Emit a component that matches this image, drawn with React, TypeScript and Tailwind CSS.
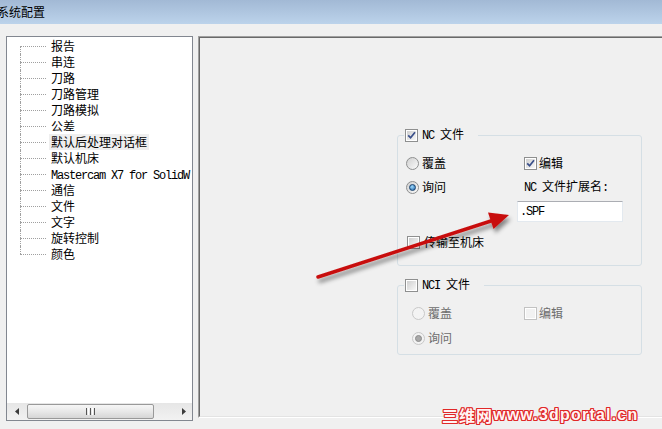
import React from "react";

const items = [
  "报告",
  "串连",
  "刀路",
  "刀路管理",
  "刀路模拟",
  "公差",
  "默认后处理对话框",
  "默认机床",
  "Mastercam X7 for SolidW",
  "通信",
  "文件",
  "文字",
  "旋转控制",
  "颜色",
];

function Mono({ children }: { children: React.ReactNode }) {
  return (
    <span className="font-['Liberation_Mono',monospace] text-[12px] tracking-[-1.2px]">
      {children}
    </span>
  );
}

function Check({ checked, disabled }: { checked?: boolean; disabled?: boolean }) {
  return (
    <span
      className={
        disabled
          ? "w-[13px] h-[13px] border border-[#c2c2c2] bg-white p-[1px] flex shrink-0"
          : "w-[13px] h-[13px] border border-[#8e8f8f] bg-white p-[1px] flex shrink-0"
      }
    >
      <span
        className={
          disabled
            ? "flex-1 flex items-center justify-center bg-[#f2f2f2]"
            : "flex-1 flex items-center justify-center bg-linear-to-br from-[#cfcfcf] to-[#f8f8f8]"
        }
      >
        {checked && (
          <svg width="9" height="9" viewBox="0 0 9 9">
            <path d="M1.2 4.3 L3.6 6.8 L8 1.2" stroke="#3a4f8a" strokeWidth="1.7" fill="none" />
          </svg>
        )}
      </span>
    </span>
  );
}

function Radio({ checked, disabled }: { checked?: boolean; disabled?: boolean }) {
  return (
    <span
      className={
        disabled
          ? "w-[13px] h-[13px] rounded-full border border-[#c8c8c8] bg-[#f3f3f3] flex items-center justify-center shrink-0"
          : "w-[13px] h-[13px] rounded-full border border-[#8e8f8f] bg-linear-to-br from-[#d0d0d0] to-[#fbfbfb] flex items-center justify-center shrink-0"
      }
    >
      {checked &&
        (disabled ? (
          <span className="w-[7px] h-[7px] rounded-full bg-[#a8a8a8] border border-[#8c8c8c]" />
        ) : (
          <span className="w-[7px] h-[7px] rounded-full bg-[radial-gradient(circle_at_40%_35%,#9fdcff,#1b5fa3)] border border-[#17416e]" />
        ))}
    </span>
  );
}

function TreeRow({ label, first, last, sel }: { label: string; first: boolean; last: boolean; sel: boolean }) {
  const ascii = /^[\x00-\x7f]+$/.test(label);
  return (
    <div className="flex h-[16px] pl-[13px]">
      <div className="w-[26px] flex flex-col shrink-0">
        <div className={first ? "h-[8px]" : "h-[8px] border-l border-dotted border-[#a0a0a0]"} />
        <div
          className={
            last
              ? "h-[8px] border-t border-dotted border-[#a0a0a0]"
              : "h-[8px] border-t border-l border-dotted border-[#a0a0a0]"
          }
        />
      </div>
      <span
        className={
          sel
            ? "ml-[3px] px-[2px] leading-[16px] whitespace-nowrap bg-[#efefef]"
            : "ml-[3px] px-[2px] leading-[16px] whitespace-nowrap"
        }
      >
        {ascii ? <Mono>{label}</Mono> : label}
      </span>
    </div>
  );
}

export default function App() {
  return (
    <div className="w-[662px] h-[429px] bg-[#f0f0f0] overflow-hidden relative font-['Noto_Sans_CJK_SC',sans-serif] text-[12px] text-black">
      {/* title bar */}
      <div className="h-[24px] bg-linear-to-b from-[#a2b9d5] to-[#bcd3eb] flex items-center">
        <span className="ml-[-3px] text-[12px] leading-[16px]">系统配置</span>
      </div>

      <div className="flex pt-[12px]">
        {/* tree panel */}
        <div className="ml-[6px] w-[187px] h-[385px] border border-[#828790] bg-white flex flex-col shrink-0">
          <div className="flex-1 pt-[1px] overflow-hidden">
            {items.map((it, i) => (
              <TreeRow key={it} label={it} first={i === 0} last={i === items.length - 1} sel={i === 6} />
            ))}
          </div>
          <div className="h-[17px] flex bg-linear-to-b from-[#e6e6e6] to-[#f2f2f2]">
            <div className="w-[20px] flex items-center justify-center">
              <svg width="4" height="7" viewBox="0 0 4 7">
                <path d="M4 0 L0 3.5 L4 7 Z" fill="#3c3c3c" />
              </svg>
            </div>
            <div className="w-[127px] my-[1px] rounded-[2px] border border-[#999999] bg-linear-to-b from-[#f6f6f6] via-[#e8e8e8] to-[#d6d6d6] flex items-center justify-center">
              <div className="flex gap-[1px]">
                <span className="w-[1px] h-[7px] bg-[#555]" />
                <span className="w-[1px] h-[7px] bg-white" />
                <span className="w-[1px] h-[7px] bg-[#555]" />
                <span className="w-[1px] h-[7px] bg-white" />
                <span className="w-[1px] h-[7px] bg-[#555]" />
              </div>
            </div>
            <div className="flex-1 flex items-center justify-end pr-[6px]">
              <svg width="4" height="7" viewBox="0 0 4 7">
                <path d="M0 0 L4 3.5 L0 7 Z" fill="#3c3c3c" />
              </svg>
            </div>
          </div>
        </div>

        {/* right panel */}
        <div className="ml-[5px] w-[480px] h-[382px] shrink-0 border-l border-t border-[#a0a0a0] border-b border-b-white">
          <div className="h-full border-l border-t border-[#696969] border-b border-b-[#e3e3e3] pl-[197px] pt-[90px]">
            {/* NC group */}
            <fieldset className="w-[245px] border border-[#d5dfe5] rounded-[3px] p-0 pb-[15px]">
              <legend className="ml-[6px] px-[1px] pr-[14px]">
                <span className="flex items-center h-[14px] gap-[4px]">
                  <Check checked />
                  <span className="leading-[14px]">
                    <Mono>NC </Mono>文件
                  </span>
                </span>
              </legend>
              <div className="pl-[8px]">
                <div className="mt-[13px] flex h-[16px] items-center">
                  <div className="w-[118px] flex items-center gap-[3px]">
                    <Radio />
                    <span className="leading-[16px]">覆盖</span>
                  </div>
                  <div className="flex items-center gap-[2px]">
                    <Check checked />
                    <span className="leading-[16px]">编辑</span>
                  </div>
                </div>
                <div className="mt-[8px] flex h-[16px] items-center">
                  <div className="w-[118px] flex items-center gap-[3px]">
                    <Radio checked />
                    <span className="leading-[16px]">询问</span>
                  </div>
                  <span className="leading-[16px]">
                    <Mono>NC </Mono>文件扩展名<Mono>:</Mono>
                  </span>
                </div>
                <div className="mt-[6px] ml-[111px] w-[106px] h-[21px] bg-white border border-[#e3e9ef] border-t-[#abadb3] flex items-center pl-[2px]">
                  <Mono>.SPF</Mono>
                </div>
                <div className="mt-[12px] ml-[1px] flex h-[16px] items-center gap-[4px]">
                  <Check />
                  <span className="leading-[16px]">传输至机床</span>
                </div>
              </div>
            </fieldset>

            {/* NCI group */}
            <fieldset className="mt-[12px] w-[245px] border border-[#d5dfe5] rounded-[3px] p-0 pb-[8px]">
              <legend className="ml-[6px] px-[1px] pr-[14px]">
                <span className="flex items-center h-[14px] gap-[4px]">
                  <Check />
                  <span className="leading-[14px]">
                    <Mono>NCI </Mono>文件
                  </span>
                </span>
              </legend>
              <div className="pl-[8px] text-[#6d6d6d]">
                <div className="mt-[13px] flex h-[16px] items-center">
                  <div className="w-[118px] flex items-center gap-[3px] pl-[6px]">
                    <Radio disabled />
                    <span className="leading-[16px]">覆盖</span>
                  </div>
                  <div className="flex items-center gap-[2px]">
                    <Check disabled />
                    <span className="leading-[16px]">编辑</span>
                  </div>
                </div>
                <div className="mt-[9px] flex h-[16px] items-center">
                  <div className="w-[118px] flex items-center gap-[3px] pl-[6px]">
                    <Radio checked disabled />
                    <span className="leading-[16px]">询问</span>
                  </div>
                </div>
              </div>
            </fieldset>
          </div>
        </div>
      </div>

      {/* red annotation arrow */}
      <svg className="absolute left-0 top-0 pointer-events-none" width="662" height="429" viewBox="0 0 662 429">
        <defs>
          <filter id="sh" x="-20%" y="-50%" width="140%" height="200%">
            <feDropShadow dx="2" dy="4" stdDeviation="2" floodColor="#000" floodOpacity="0.45" />
          </filter>
        </defs>
        <g filter="url(#sh)">
          <line x1="318" y1="277" x2="494" y2="220" stroke="#c8100e" strokeWidth="3.5" strokeLinecap="round" />
          <polygon points="509,215 493.5,229 488,212.5" fill="#c8100e" />
        </g>
      </svg>

      {/* watermark */}
      <div className="absolute left-[442px] top-[406px] flex items-center whitespace-nowrap text-[#fff4f4] font-bold leading-[18px] [text-shadow:1px_0_0_#e02828,-1px_0_0_#e02828,0_1px_0_#e02828,0_-1px_0_#e02828,1px_1px_0_#e02828,-1px_-1px_0_#e02828,1px_-1px_0_#e02828,-1px_1px_0_#e02828]">
        <span className="text-[16px] font-['Noto_Sans_CJK_SC',sans-serif] tracking-[1px]">三维网</span>
        <span className="text-[16px] font-['Liberation_Sans',sans-serif] tracking-[1.2px]">www.3dportal.cn</span>
      </div>
    </div>
  );
}
